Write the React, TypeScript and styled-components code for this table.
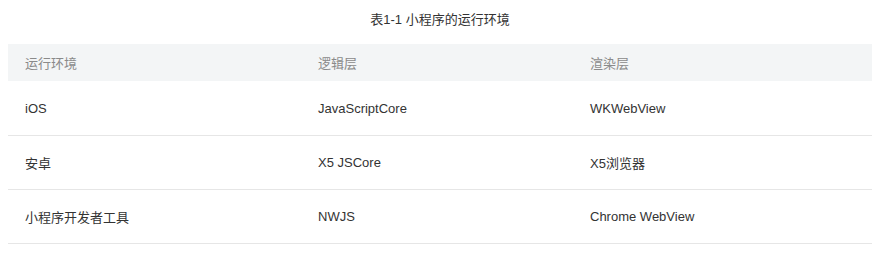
import React from 'react'
import styled, { createGlobalStyle } from 'styled-components'

const GlobalStyle = createGlobalStyle`
    body {
        margin: 0;
        background: #ffffff;
        font-family: "Liberation Sans", "Noto Sans CJK SC", sans-serif;
        -webkit-font-smoothing: antialiased;
    }
`

const Page = styled.div`
    padding: 0 8px;
`

const Caption = styled.div`
    width: 864px;
    padding: 10px 0 14px;
    line-height: 20px;
    font-size: 13px;
    color: #333333;
    text-align: center;
`

const StyledTable = styled.table`
    width: 864px;
    border-collapse: collapse;
    table-layout: fixed;
`

const HeadRow = styled.tr`
    background-color: #f3f5f6;
`

const Row = styled.tr`
    border-bottom: 1px solid #e6e6e6;
`

const Heading = styled.th<{ $w: number }>`
    box-sizing: border-box;
    width: ${({ $w }) => $w}px;
    height: 37px;
    padding: 0 0 0 17px;
    font-size: 13px;
    font-weight: normal;
    color: #8a8a8a;
    text-align: left;
    vertical-align: middle;
`

const Cell = styled.td`
    box-sizing: border-box;
    height: 54px;
    padding: 1px 0 0 17px;
    font-size: 13px;
    color: #333333;
    text-align: left;
    vertical-align: middle;
`

const columns = [
    { title: '运行环境', width: 293 },
    { title: '逻辑层', width: 272 },
    { title: '渲染层', width: 299 },
]

const rows: string[][] = [
    ['iOS', 'JavaScriptCore', 'WKWebView'],
    ['安卓', 'X5 JSCore', 'X5浏览器'],
    ['小程序开发者工具', 'NWJS', 'Chrome WebView'],
]

const App = (): React.ReactElement => (
    <Page>
        <GlobalStyle />
        <Caption>表1-1 小程序的运行环境</Caption>
        <StyledTable>
            <thead>
                <HeadRow>
                    {columns.map((col) => (
                        <Heading key={col.title} $w={col.width}>{col.title}</Heading>
                    ))}
                </HeadRow>
            </thead>
            <tbody>
                {rows.map((row, index) => (
                    <Row key={index}>
                        {row.map((value, i) => <Cell key={i}>{value}</Cell>)}
                    </Row>
                ))}
            </tbody>
        </StyledTable>
    </Page>
)

export default App
